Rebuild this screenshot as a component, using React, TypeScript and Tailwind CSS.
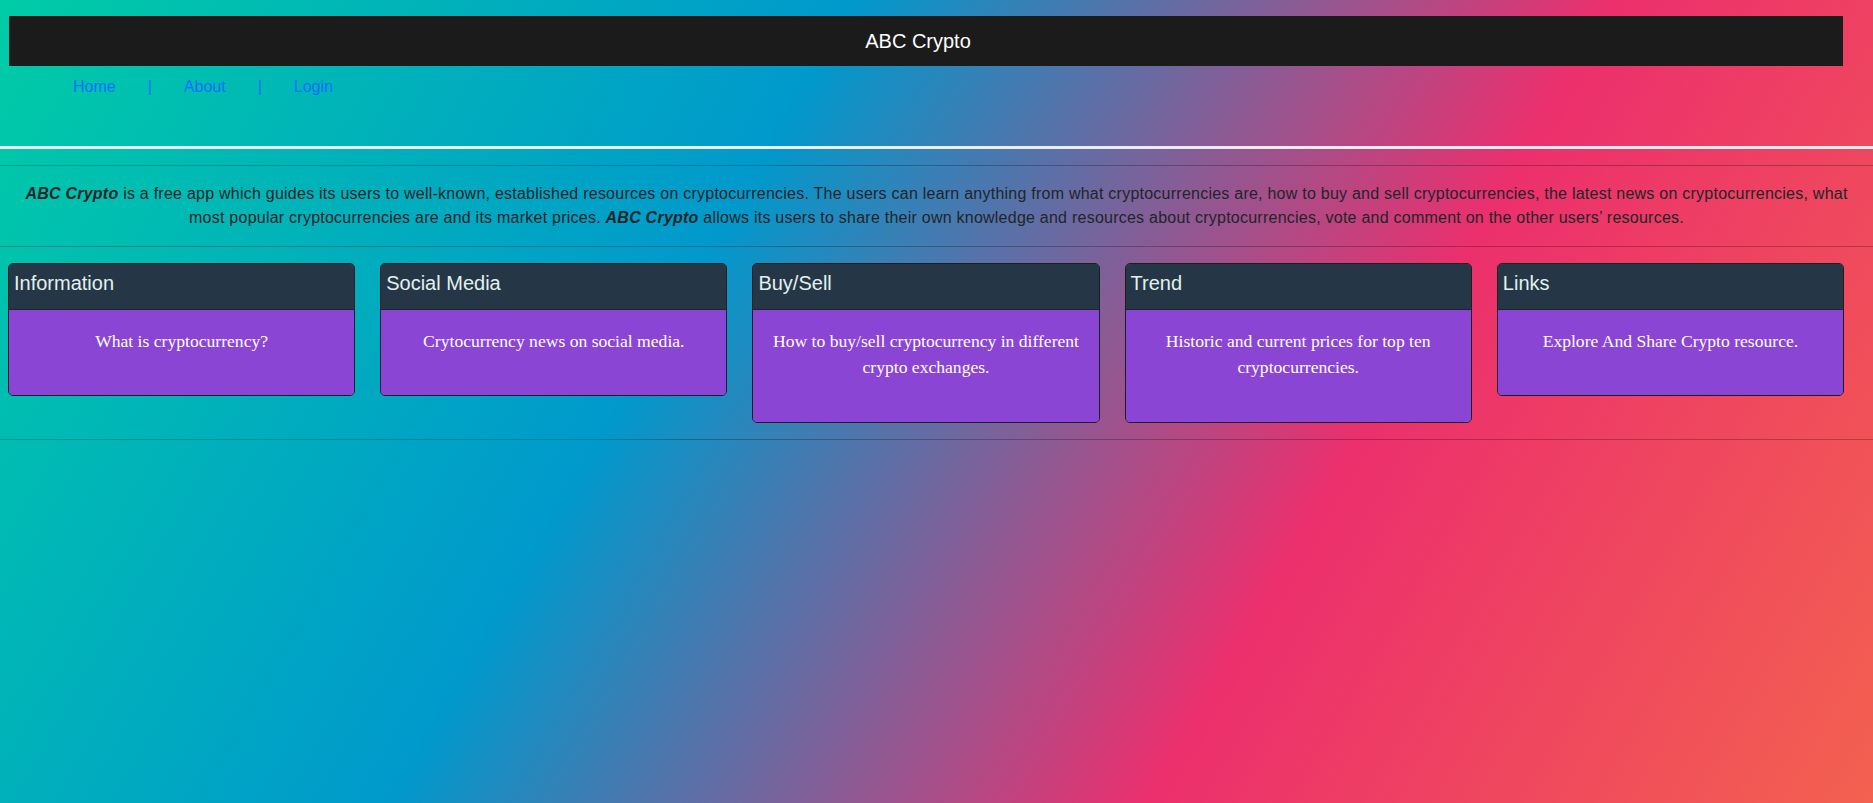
import React from "react";

const cards = [
  { title: "Information", body: "What is cryptocurrency?" },
  { title: "Social Media", body: "Crytocurrency news on social media." },
  { title: "Buy/Sell", body: "How to buy/sell cryptocurrency in different crypto exchanges." },
  { title: "Trend", body: "Historic and current prices for top ten cryptocurrencies." },
  { title: "Links", body: "Explore And Share Crypto resource." },
];

export default function App() {
  return (
    <div
      className="min-h-screen w-full bg-[linear-gradient(120deg,#00cca6_0%,#0099cc_36.5%,#ec2f6d_69%,#f3614f_100%)] text-[#212529] text-[16px] leading-6"
      style={{ fontFamily: '"Liberation Sans", Arial, sans-serif' }}
    >
      <div className="pl-[9px] pr-[30px] pt-[16px]">
        <div className="h-[50px] bg-[#1b1b1b] flex items-center justify-center pr-[16px] text-white text-[20px] font-medium">
          ABC Crypto
        </div>
        <nav className="mt-[9px] pl-[64px] flex gap-8 text-[#0d6efd]">
          <a href="#">Home</a>
          <span>|</span>
          <a href="#">About</a>
          <span>|</span>
          <a href="#">Login</a>
        </nav>
      </div>

      <div className="mt-[47px] h-[3px] bg-[#ececec]" />
      <div className="mt-[16px] h-px bg-black/25" />

      <p className="mt-[16px] px-[12px] text-center tracking-[0.24px]">
        <b className="italic font-bold">ABC Crypto</b> is a free app which guides its users to well-known, established
        resources on cryptocurrencies. The users can learn anything from what cryptocurrencies are, how to buy and sell
        cryptocurrencies, the latest news on cryptocurrencies, what most popular cryptocurrencies are and its market
        prices. <b className="italic font-bold">ABC Crypto</b> allows its users to share their own knowledge and
        resources about cryptocurrencies, vote and comment on the other users’ resources.
      </p>

      <div className="mt-[16px] h-px bg-black/25" />

      <div className="mt-[16px] pl-[8px] pr-[29px] flex items-start gap-[25px]">
        {cards.map((c) => (
          <div
            key={c.title}
            className="flex-1 min-w-0 border border-[#1d1d22] rounded-[5px] overflow-hidden"
          >
            <div className="h-[46px] bg-[#253746] border-b border-[#1a2530] pl-[5px] pt-[7px] text-[20px] leading-6 font-medium text-[#e2f0ef]">
              {c.title}
            </div>
            <div
              className="bg-[#8a45d4] text-white text-center px-4 pt-[18px] pb-[41px] text-[17.6px] leading-[26.4px]"
              style={{ fontFamily: '"Liberation Serif", "Times New Roman", serif' }}
            >
              {c.body}
            </div>
          </div>
        ))}
      </div>

      <div className="mt-[16px] h-px bg-black/25" />
    </div>
  );
}
